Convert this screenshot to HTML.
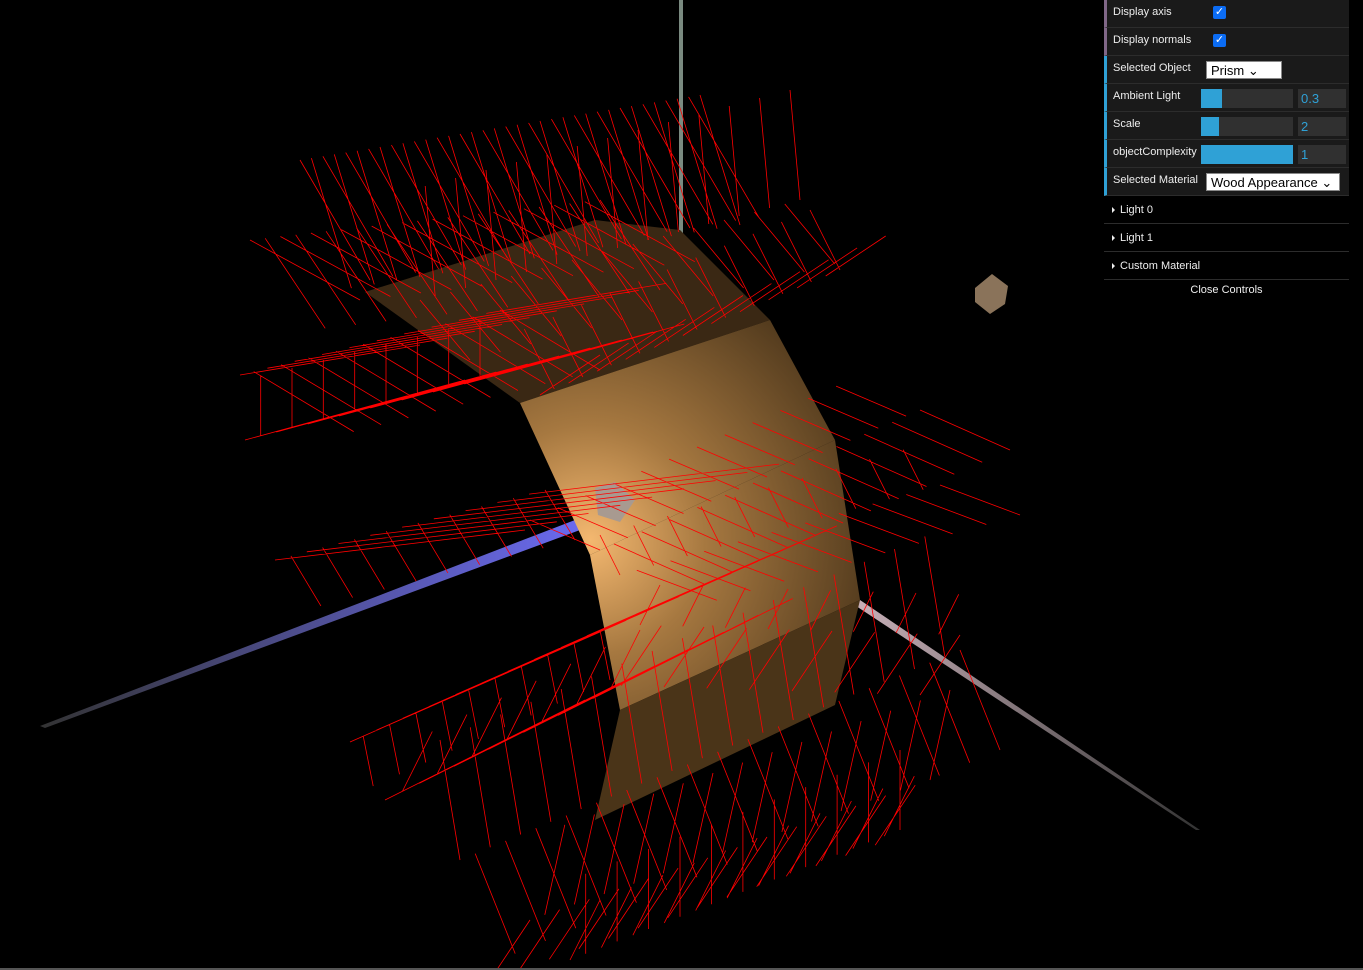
<!DOCTYPE html>
<html><head><meta charset="utf-8"><style>
html,body{margin:0;padding:0;background:#000;width:1363px;height:970px;overflow:hidden;font-family:"Liberation Sans",sans-serif}
#panel{position:absolute;left:1104px;top:0;width:245px;background:#000;color:#eee;font-size:11px}
.row{height:27px;border-bottom:1px solid #2c2c2c;background:#1a1a1a;position:relative;border-left:3px solid #2fa1d6}
.row.b{border-left-color:#806787}
.row .l{position:absolute;left:6px;top:6px}
.cb{position:absolute;left:106px;top:6px;width:13px;height:13px;background:#0b6cf4;border-radius:2px;color:#fff;font-size:11px;line-height:13px;text-align:center}
.sel{position:absolute;left:99px;top:5px;height:18px;background:#fff;color:#000;border:1px solid #888;font-size:13px;line-height:17px;padding-left:4px;box-sizing:border-box}
.sl{position:absolute;left:94px;top:5px;width:92px;height:19px;background:#303030}
.sl i{display:block;height:100%;background:#2fa1d6}
.nb{position:absolute;left:191px;top:5px;width:48px;height:19px;background:#303030;color:#2fa1d6;font-size:13px;line-height:19px;padding-left:3px;box-sizing:border-box}
.f{height:27px;border-bottom:1px solid #2c2c2c;position:relative}
.f span{position:absolute;left:16px;top:8px}
.f:before{content:"";position:absolute;left:8px;top:11px;border-left:3px solid #eee;border-top:3px solid transparent;border-bottom:3px solid transparent}
.cl{text-align:center;height:20px;line-height:20px}
</style></head><body>
<svg id="s" width="1363" height="970" style="position:absolute;left:0;top:0">
<defs>
<radialGradient id="g" cx="590" cy="540" r="330" gradientUnits="userSpaceOnUse">
<stop offset="0" stop-color="#f4b870"/><stop offset="0.35" stop-color="#a67840"/><stop offset="1" stop-color="#3c2a14"/></radialGradient>
<linearGradient id="bx" x1="0" y1="0" x2="1" y2="0"><stop offset="0" stop-color="#333"/><stop offset="1" stop-color="#6a6af0"/></linearGradient>
<linearGradient id="bx2" x1="0" y1="0" x2="1" y2="0"><stop offset="0" stop-color="#c8b0b8"/><stop offset="1" stop-color="#333"/></linearGradient>
</defs>
<line x1="681" y1="0" x2="681" y2="235" stroke="#7a8a80" stroke-width="4"/>
<polygon points="40,726 575,520 580,530 45,728" fill="url(#bx)"/>
<polygon points="860,600 1200,830 1196,830 856,606" fill="url(#bx2)"/>
<polygon points="365,292 595,220 680,230 770,320 520,403" fill="#3a2814"/>
<polygon points="520,403 770,320 835,440 590,555" fill="url(#g)"/>
<polygon points="590,555 835,440 860,600 620,710" fill="url(#g)"/>
<polygon points="620,710 860,600 835,705 595,820" fill="#4a3418"/>
<polygon points="595,488 615,482 635,500 620,522 598,515" fill="#a89a90"/>
<polygon points="975,288 992,274 1008,286 1005,304 990,314 975,302" fill="#8a735a"/>
<g stroke="#f00" stroke-width="0.8" fill="none"><path id="n"/></g>
<rect x="0" y="968" width="1363" height="2" fill="#555"/>
</svg>
<div id="panel">
<div class="row b"><span class="l">Display axis</span><span class="cb">✓</span></div>
<div class="row b"><span class="l">Display normals</span><span class="cb">✓</span></div>
<div class="row"><span class="l">Selected Object</span><span class="sel" style="width:76px">Prism ⌄</span></div>
<div class="row"><span class="l">Ambient Light</span><span class="sl"><i style="width:21px"></i></span><span class="nb">0.3</span></div>
<div class="row"><span class="l">Scale</span><span class="sl"><i style="width:18px"></i></span><span class="nb">2</span></div>
<div class="row"><span class="l">objectComplexity</span><span class="sl"><i style="width:92px"></i></span><span class="nb">1</span></div>
<div class="row"><span class="l">Selected Material</span><span class="sel" style="width:134px">Wood Appearance ⌄</span></div>
<div class="f"><span>Light 0</span></div>
<div class="f"><span>Light 1</span></div>
<div class="f"><span>Custom Material</span></div>
<div class="cl">Close Controls</div>
</div>
<script>
var d='';
function c(ax,ay,bx,by,n,v1x,v1y,v2x,v2y){for(var i=0;i<n;i++){var t=i/(n-1),x=ax+(bx-ax)*t,y=ay+(by-ay)*t,vx=i%2?v1x:v2x,vy=i%2?v1y:v2y;d+='M'+x.toFixed(1)+' '+y.toFixed(1)+'l'+vx+' '+vy;}}
c(300,160,700,95,36,40,130,70,120);
c(250,240,600,200,24,60,90,110,60);
c(420,300,800,200,26,-10,-110,50,60);
c(240,375,500,310,20,100,60,180,-30);
c(245,440,480,380,16,0,-60,220,-60);
c(275,560,545,490,18,30,50,250,-30);
c(540,395,840,270,22,-30,-60,60,-40);
c(600,550,920,410,24,90,40,-70,-30);
c(620,575,940,485,20,80,30,-20,-40);
c(350,742,600,630,20,10,50,250,-110);
c(385,800,610,690,14,30,-60,200,-100);
c(460,860,960,650,34,40,100,-20,-120);
c(530,920,930,780,28,20,-90,-40,60);
c(570,960,900,830,22,0,-80,30,-60);
c(640,625,960,635,16,-40,60,20,-40);
document.getElementById('n').setAttribute('d',d);
</script>
</body></html>
